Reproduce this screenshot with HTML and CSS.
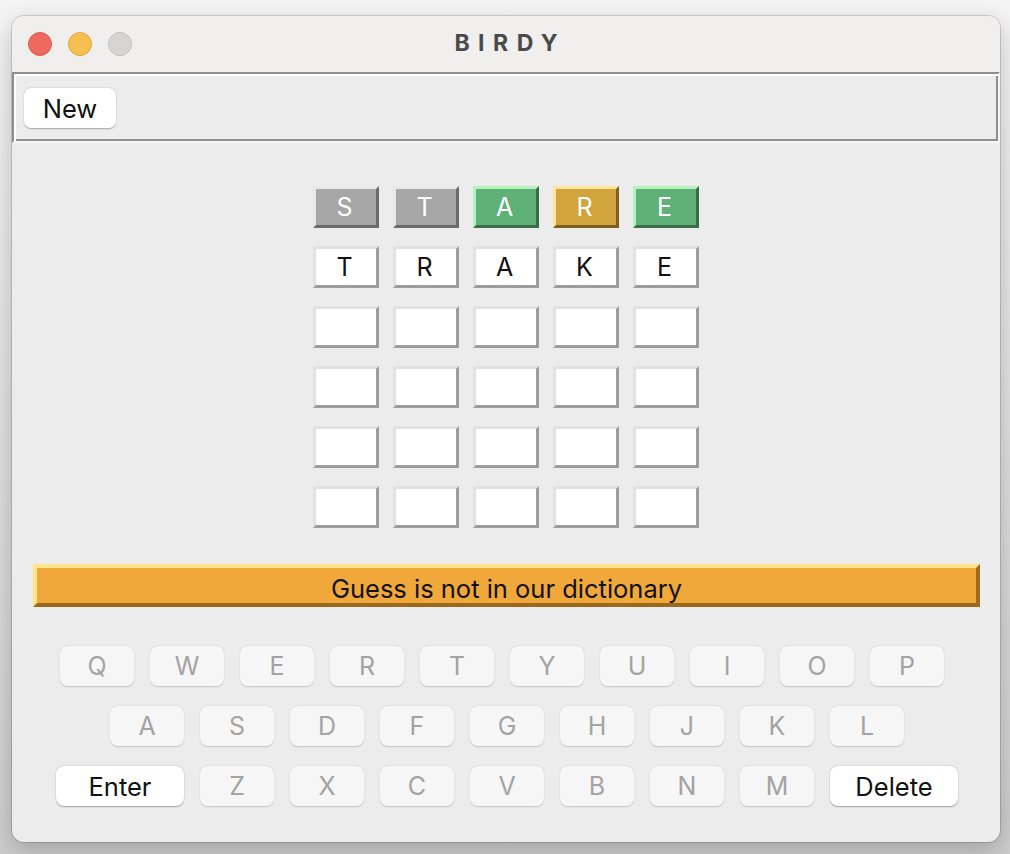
FILE: index.html
```html
<!DOCTYPE html>
<html>
<head>
<meta charset="utf-8">
<link rel="stylesheet" href="styles.css">
</head>
<body>
<div class="window">
  <div class="titlebar">
    <div class="lights">
      <span class="light red"></span>
      <span class="light yellow"></span>
      <span class="light gray"></span>
    </div>
    <div class="title">BIRDY</div>
    <div></div>
  </div>
  <div class="toolbar">
    <button class="btn">New</button>
  </div>
  <div class="board">
    <div class="tile absent">S</div>
    <div class="tile absent">T</div>
    <div class="tile correct">A</div>
    <div class="tile present">R</div>
    <div class="tile correct">E</div>

    <div class="tile">T</div>
    <div class="tile">R</div>
    <div class="tile">A</div>
    <div class="tile">K</div>
    <div class="tile">E</div>

    <div class="tile"></div><div class="tile"></div><div class="tile"></div><div class="tile"></div><div class="tile"></div>
    <div class="tile"></div><div class="tile"></div><div class="tile"></div><div class="tile"></div><div class="tile"></div>
    <div class="tile"></div><div class="tile"></div><div class="tile"></div><div class="tile"></div><div class="tile"></div>
    <div class="tile"></div><div class="tile"></div><div class="tile"></div><div class="tile"></div><div class="tile"></div>
  </div>
  <div class="banner">Guess is not in our dictionary</div>
  <div class="keyboard">
    <div class="krow row1">
      <span class="key">Q</span><span class="key">W</span><span class="key">E</span><span class="key">R</span><span class="key">T</span><span class="key">Y</span><span class="key">U</span><span class="key">I</span><span class="key">O</span><span class="key">P</span>
    </div>
    <div class="krow row2">
      <span class="key">A</span><span class="key">S</span><span class="key">D</span><span class="key">F</span><span class="key">G</span><span class="key">H</span><span class="key">J</span><span class="key">K</span><span class="key">L</span>
    </div>
    <div class="krow row3">
      <span class="key wide">Enter</span><span class="key">Z</span><span class="key">X</span><span class="key">C</span><span class="key">V</span><span class="key">B</span><span class="key">N</span><span class="key">M</span><span class="key wide">Delete</span>
    </div>
  </div>
</div>
</body>
</html>
```
FILE: styles.css
```css
html, body {
  margin: 0;
  padding: 0;
}
body {
  width: 1010px;
  height: 854px;
  background: linear-gradient(180deg, #f4f4f4 0%, #dcdcdc 60%, #cdcdcd 100%);
  font-family: Inter, "Liberation Sans", sans-serif;
  overflow: hidden;
}
.window {
  margin: 16px 0 0 12px;
  width: 988px;
  height: 826px;
  border-radius: 12px;
  overflow: hidden;
  background: #ececec;
  box-shadow: 0 0 0 1px rgba(0,0,0,0.14), 0 8px 24px rgba(0,0,0,0.22);
}
.titlebar {
  height: 56px;
  background: #f0efed;
  display: grid;
  grid-template-columns: 1fr auto 1fr;
  align-items: center;
}
.lights {
  display: flex;
  gap: 16px;
  padding-left: 16px;
}
.light {
  width: 22px;
  height: 22px;
  border-radius: 50%;
  border: 1px solid;
}
.light.red { background: #ee6a5f; border-color: #d85a50; }
.light.yellow { background: #f5c04f; border-color: #dba640; }
.light.gray { background: #d6d5d4; border-color: #c3c2c1; }
.title {
  font-size: 23px;
  font-weight: 700;
  letter-spacing: 8.5px;
  margin-right: -8.5px;
  margin-bottom: 2px;
  color: #4a4a4a;
}
.toolbar {
  border-style: solid;
  border-width: 2px;
  border-color: #8e8e8e #f6f6f6 #f6f6f6 #8e8e8e;
  box-shadow: inset 2px 2px 0 #ffffff, inset -2px -2px 0 #8e8e8e;
  box-sizing: content-box;
  padding: 14px 0 0 10px;
  background: #ececec;
  height: 53px;
}
.btn {
  display: block;
  width: 92px;
  height: 40px;
  border: none;
  border-radius: 7px;
  background: #ffffff;
  box-shadow: 0 0.5px 1.5px rgba(0,0,0,0.3);
  font-family: Inter, "Liberation Sans", sans-serif;
  font-size: 25.5px;
  color: #111;
  padding: 0;
}
.board {
  margin: 43px auto 0;
  width: 386px;
  display: grid;
  grid-template-columns: repeat(5, 66px);
  grid-auto-rows: 42px;
  column-gap: 14px;
  row-gap: 18px;
}
.tile {
  box-sizing: border-box;
  border: 3px solid;
  border-color: #e1e1e1 #9d9d9d #9d9d9d #e1e1e1;
  background: #ffffff;
  display: flex;
  align-items: center;
  justify-content: center;
  padding-right: 3px;
  font-size: 25px;
  color: #111;
}
.tile.absent {
  background: #a6a6a6;
  border-color: #e8e8e8 #6b6b6b #6b6b6b #e8e8e8;
  color: #fff;
}
.tile.correct {
  background: #60b177;
  border-color: #b4f2bb #3b6b49 #3b6b49 #b4f2bb;
  color: #fff;
}
.tile.present {
  background: #d2a53c;
  border-color: #fde59b #7e5e22 #7e5e22 #fde59b;
  color: #fff;
}
.banner {
  margin: 36px 20px 0 21px;
  height: 43px;
  box-sizing: border-box;
  border: 4px solid;
  border-color: #fde58e #9b6a1f #9b6a1f #fde58e;
  background: #f1a83b;
  display: flex;
  align-items: center;
  justify-content: center;
  padding-top: 6px;
  font-size: 25.5px;
  color: #111;
}
.keyboard {
  margin-top: 39px;
  display: flex;
  flex-direction: column;
  gap: 20px;
}
.krow {
  display: flex;
  gap: 16px;
}
.row1 { padding-left: 48px; }
.row2 { padding-left: 98px; }
.row3 { padding-left: 44px; }
.key {
  width: 74px;
  height: 40px;
  border-radius: 8px;
  background: #f6f6f6;
  box-shadow: 0 0.5px 1.5px rgba(0,0,0,0.18);
  display: flex;
  align-items: center;
  justify-content: center;
  font-size: 25px;
  color: #a3a3a3;
}
.key.wide {
  width: 128px;
  background: #ffffff;
  color: #111;
  font-size: 25.5px;
  box-shadow: 0 0.5px 1.5px rgba(0,0,0,0.32);
}
```
